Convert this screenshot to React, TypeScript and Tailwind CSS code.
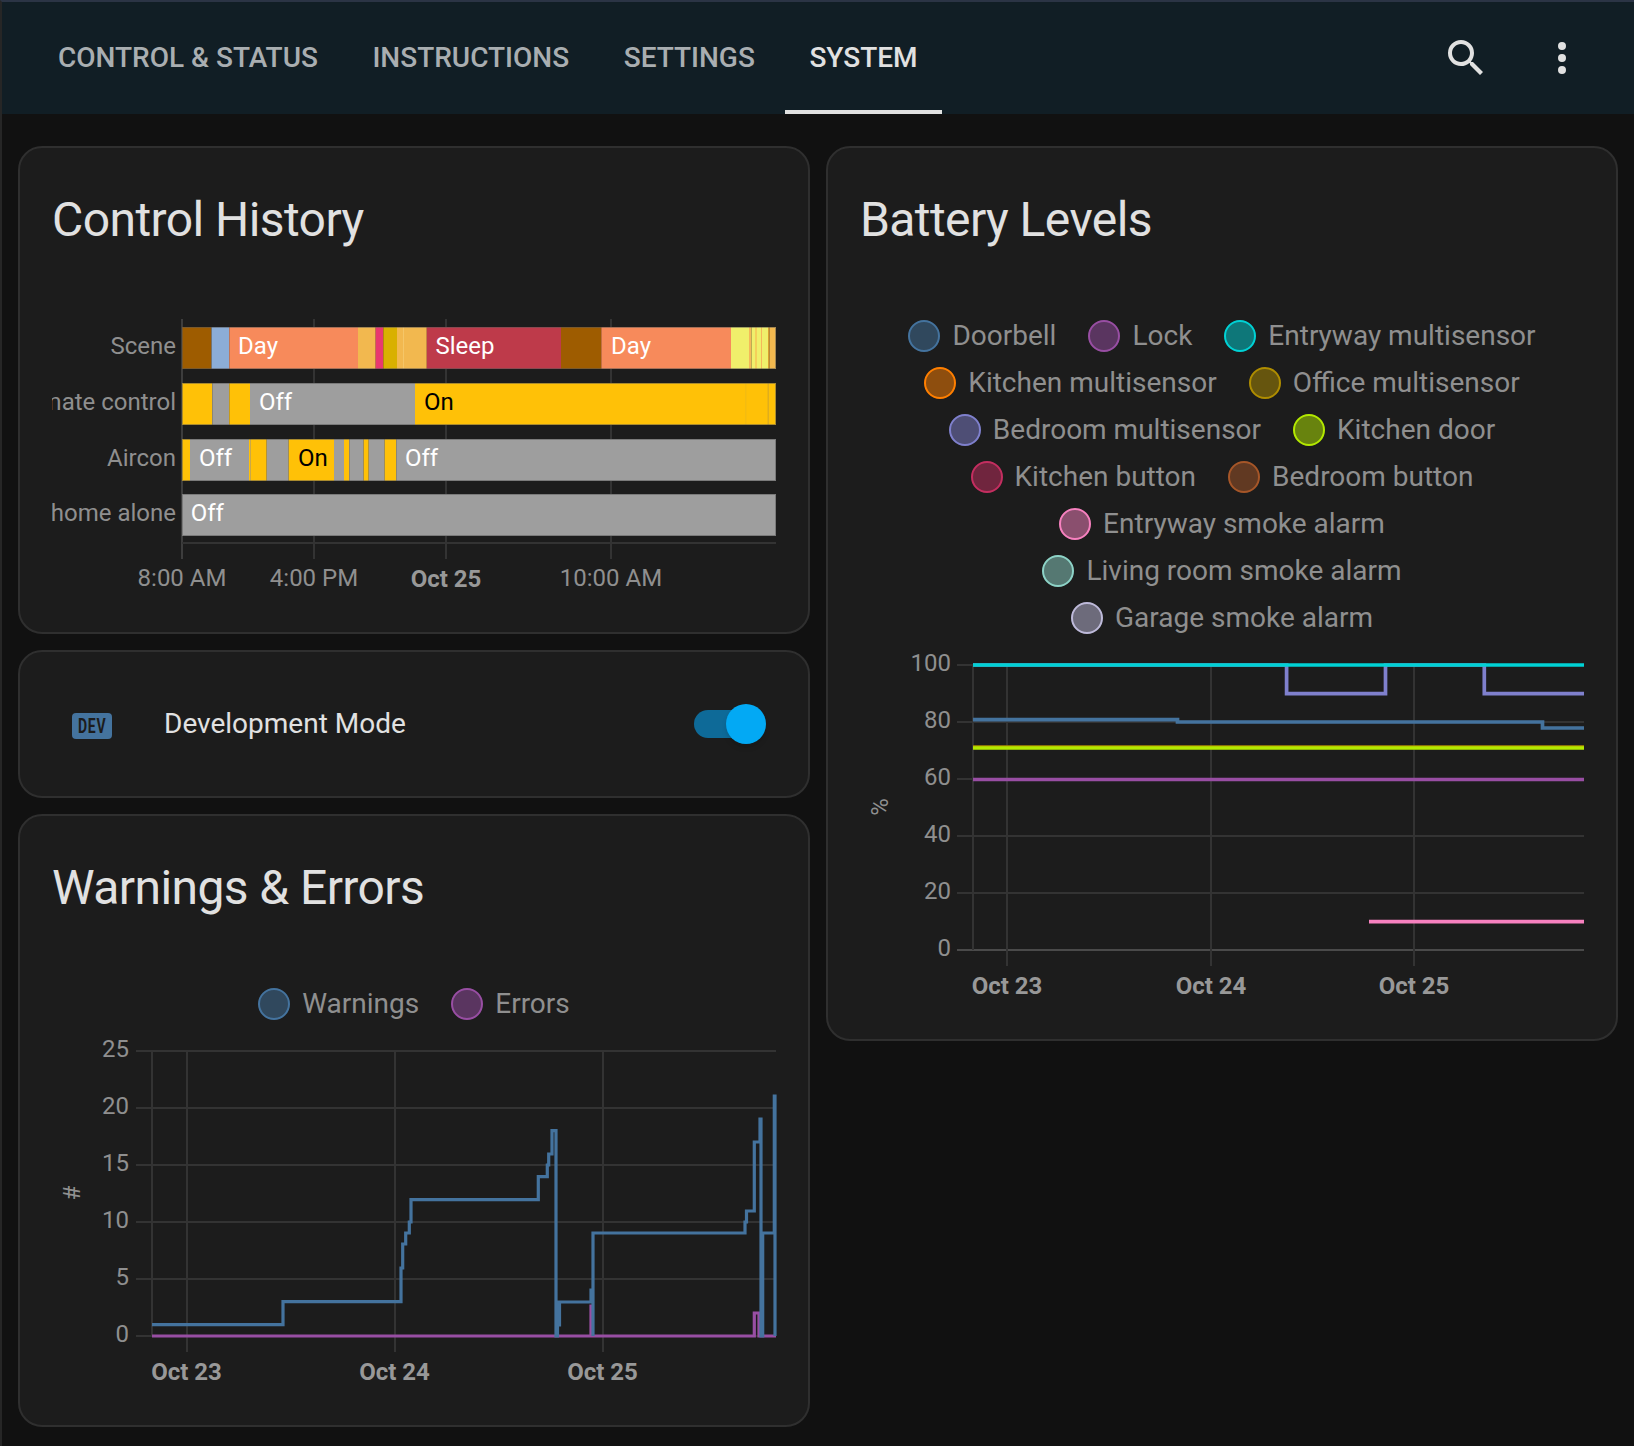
import type { ReactNode } from "react";

const GRID = "#333333";

const tabs = ["CONTROL & STATUS", "INSTRUCTIONS", "SETTINGS", "SYSTEM"];

type Seg = [number, number, string];

const BROWN = "#9e5c00";
const DAY = "#f78a5b";
const AMBER = "#f2b84f";
const YEL = "#ffc107";
const GRY = "#9e9e9e";
const LEMON = "#f0ef6b";

const timeline: { label: string; y: number; segs: Seg[]; texts: [number, string, string][] }[] = [
  {
    label: "Scene",
    y: 327,
    segs: [
      [182, 211.5, BROWN],
      [211.5, 229.3, "#8cadd6"],
      [229.3, 358, DAY],
      [358, 375.7, AMBER],
      [375.7, 383.3, "#e8396f"],
      [383.3, 397, "#d9b000"],
      [397, 426.8, AMBER],
      [403, 404, "#f5c668"],
      [426.8, 561, "#be3a4a"],
      [561, 601.3, BROWN],
      [601.3, 731, DAY],
      [731, 749, LEMON],
      [749, 751.5, "#f5b85a"],
      [751.5, 755, LEMON],
      [755, 757, "#f5cf5a"],
      [757, 761, LEMON],
      [761, 762, "#f5b85a"],
      [762, 768, LEMON],
      [768, 769.5, "#d9a030"],
      [769.5, 776, AMBER],
    ],
    texts: [
      [238, "Day", "#ffffff"],
      [435.5, "Sleep", "#ffffff"],
      [611, "Day", "#ffffff"],
    ],
  },
  {
    label: "Climate control",
    y: 383,
    segs: [
      [182, 212.3, YEL],
      [212.3, 229.3, GRY],
      [229.3, 250, YEL],
      [250, 415, GRY],
      [415, 776, YEL],
      [745.3, 746.3, "#efb915"],
      [767.5, 769, "#e0ae1c"],
    ],
    texts: [
      [259, "Off", "#ffffff"],
      [424, "On", "#000000"],
    ],
  },
  {
    label: "Aircon",
    y: 439,
    segs: [
      [182, 190, YEL],
      [190, 249, GRY],
      [249, 266.7, YEL],
      [250, 251, "#c9a84a"],
      [266.7, 288.7, GRY],
      [288.7, 334, YEL],
      [334, 344, GRY],
      [344, 349.3, YEL],
      [349.3, 363.7, GRY],
      [363.7, 368.7, YEL],
      [368.7, 384.7, GRY],
      [384.7, 396.3, YEL],
      [396.3, 776, GRY],
    ],
    texts: [
      [199, "Off", "#ffffff"],
      [298, "On", "#000000"],
      [405, "Off", "#ffffff"],
    ],
  },
  {
    label: "Dog home alone",
    y: 494,
    segs: [[182, 776, GRY]],
    texts: [[190.7, "Off", "#ffffff"]],
  },
];

const warningsPath =
  "M152 1324.6H283V1301.7H401V1268H402.7V1244H405.7V1233H409.3V1222H411V1199.7H538.3V1176.7H547.3V1165H548.7V1154H552V1130.7H556V1336H557.5V1302H558.5V1325H559.5V1302H591V1290H593V1336V1233H745V1222H746.5V1211H754.3V1142H760V1119H761V1336H762.7V1233H774.3V1096H775V1336";
const errorsPath = "M152 1336H591V1306H592V1336H754.3V1313H759V1336H776";

const batteryLines: [string, string][] = [
  ["#984ea3", "M973 779.5H1584"],
  ["#af8d00", "M973 747H1584"],
  ["#b3e900", "M973 748H1584"],
  ["#44739e", "M973 719.7H1177.5V722H1542.5V728H1584"],
  ["#7f80cd", "M973 665H1286.6V693.7H1385.5V665H1484.3V693.7H1584"],
  ["#f781bf", "M1369 921.7H1584"],
  ["#00d2d5", "M973 665H1584"],
];

const batteryLegend: [string, string][][] = [
  [
    ["Doorbell", "border-[#44739e] bg-[#44739e80]"],
    ["Lock", "border-[#984ea3] bg-[#984ea380]"],
    ["Entryway multisensor", "border-[#00d2d5] bg-[#00d2d580]"],
  ],
  [
    ["Kitchen multisensor", "border-[#ff7f00] bg-[#ff7f0080]"],
    ["Office multisensor", "border-[#af8d00] bg-[#af8d0080]"],
  ],
  [
    ["Bedroom multisensor", "border-[#7f80cd] bg-[#7f80cd80]"],
    ["Kitchen door", "border-[#b3e900] bg-[#b3e90080]"],
  ],
  [
    ["Kitchen button", "border-[#c42e60] bg-[#c42e6080]"],
    ["Bedroom button", "border-[#a65628] bg-[#a6562880]"],
  ],
  [["Entryway smoke alarm", "border-[#f781bf] bg-[#f781bf80]"]],
  [["Living room smoke alarm", "border-[#8dd3c7] bg-[#8dd3c780]"]],
  [["Garage smoke alarm", "border-[#bebada] bg-[#bebada80]"]],
];

function Card({ title, children }: { title: string; children: ReactNode }) {
  return (
    <section className="rounded-3xl border-2 border-[#2f2f2f] bg-[#1c1c1c]">
      <h2 className="h-[132px] pl-8 pt-10 text-[48px] leading-[64px] font-normal tracking-[-0.012em] text-[#e1e1e1]">
        {title}
      </h2>
      {children}
    </section>
  );
}

function LegendRow({ items }: { items: [string, string][] }) {
  return (
    <div className="flex h-[47px] items-center justify-center gap-8">
      {items.map(([name, swatch]) => (
        <div key={name} className="flex items-center gap-3">
          <span className={`h-8 w-8 rounded-full border-2 ${swatch}`} />
          <span className="text-[28px] leading-8 text-[#8f8f8f]">{name}</span>
        </div>
      ))}
    </div>
  );
}

function YTick({ x, y, label }: { x: number; y: number; label: string }) {
  return (
    <text x={x} y={y} textAnchor="end" className="fill-[#8f8f8f] text-[24px]">
      {label}
    </text>
  );
}

function XTick({ x, y, label }: { x: number; y: number; label: string }) {
  return (
    <text x={x} y={y} textAnchor="middle" className="fill-[#989898] text-[24px] font-bold">
      {label}
    </text>
  );
}

function ControlHistory() {
  return (
    <svg viewBox="20 280 788 352" className="block h-[352px] w-[788px]">
      <defs>
        <clipPath id="labels">
          <rect x="52" y="300" width="130" height="250" />
        </clipPath>
      </defs>
      {[314, 446, 611].map((x) => (
        <line key={x} x1={x} x2={x} y1={319} y2={559} stroke={GRID} strokeWidth={2} />
      ))}
      <line x1={182} x2={182} y1={319} y2={559} stroke="#3d3d3d" strokeWidth={2} />
      <line x1={182} x2={776} y1={543} y2={543} stroke={GRID} strokeWidth={2} />
      {timeline.map((row) => (
        <g key={row.label}>
          {row.segs.map(([a, b, c]) => (
            <rect key={`${a}-${c}`} x={a} y={row.y} width={b - a} height={42} fill={c} />
          ))}
          <rect
            x={182.5}
            y={row.y + 0.5}
            width={593}
            height={41}
            fill="none"
            stroke="#555555"
            strokeOpacity={0.5}
          />
          {row.texts.map(([x, t, c]) => (
            <text key={x} x={x} y={row.y + 27} fill={c} className="text-[24px]">
              {t}
            </text>
          ))}
          <text
            x={176}
            y={row.y + 27}
            textAnchor="end"
            clipPath="url(#labels)"
            className="fill-[#8f8f8f] text-[24px]"
          >
            {row.label}
          </text>
        </g>
      ))}
      <text x={182} y={586} textAnchor="middle" className="fill-[#8f8f8f] text-[24px]">
        8:00 AM
      </text>
      <text x={314} y={586} textAnchor="middle" className="fill-[#8f8f8f] text-[24px]">
        4:00 PM
      </text>
      <XTick x={446} y={587} label="Oct 25" />
      <text x={611} y={586} textAnchor="middle" className="fill-[#8f8f8f] text-[24px]">
        10:00 AM
      </text>
    </svg>
  );
}

function WarningsChart() {
  const rows: [number, string][] = [
    [1051, "25"],
    [1108, "20"],
    [1165, "15"],
    [1222, "10"],
    [1279, "5"],
    [1336, "0"],
  ];
  return (
    <svg viewBox="20 1027 788 398" className="block h-[398px] w-[788px]">
      {rows.map(([y, label]) => (
        <g key={label}>
          <line x1={136} x2={776} y1={y} y2={y} stroke={GRID} strokeWidth={2} />
          <YTick x={129} y={y + 6} label={label} />
        </g>
      ))}
      <line x1={152} x2={152} y1={1051} y2={1336} stroke={GRID} strokeWidth={2} />
      {[187, 395, 603].map((x) => (
        <line key={x} x1={x} x2={x} y1={1051} y2={1352} stroke={GRID} strokeWidth={2} />
      ))}
      <path d={errorsPath} fill="none" stroke="#984ea3" strokeWidth={3.2} />
      <path d={warningsPath} fill="none" stroke="#44739e" strokeWidth={3.2} />
      <XTick x={186.5} y={1380} label="Oct 23" />
      <XTick x={394.5} y={1380} label="Oct 24" />
      <XTick x={602.5} y={1380} label="Oct 25" />
      <text
        x={72}
        y={1193}
        textAnchor="middle"
        dominantBaseline="central"
        transform="rotate(-90 72 1193)"
        className="fill-[#8f8f8f] text-[24px]"
      >
        #
      </text>
    </svg>
  );
}

function BatteryChart() {
  const rows: [number, string][] = [
    [665, "100"],
    [722, "80"],
    [779, "60"],
    [836, "40"],
    [893, "20"],
    [950, "0"],
  ];
  return (
    <svg viewBox="828 641 788 398" className="block h-[398px] w-[788px]">
      {rows.map(([y, label]) => (
        <g key={label}>
          <line x1={957} x2={1584} y1={y} y2={y} stroke={y === 950 ? "#4a4a4a" : GRID} strokeWidth={2} />
          <YTick x={951} y={y + 6} label={label} />
        </g>
      ))}
      <line x1={973} x2={973} y1={665} y2={950} stroke={GRID} strokeWidth={2} />
      {[1007, 1211, 1414].map((x) => (
        <line key={x} x1={x} x2={x} y1={665} y2={966} stroke={GRID} strokeWidth={2} />
      ))}
      {batteryLines.map(([c, d]) => (
        <path key={c} d={d} fill="none" stroke={c} strokeWidth={3.7} />
      ))}
      <XTick x={1007} y={994} label="Oct 23" />
      <XTick x={1211} y={994} label="Oct 24" />
      <XTick x={1414} y={994} label="Oct 25" />
      <text
        x={880}
        y={807}
        textAnchor="middle"
        dominantBaseline="central"
        transform="rotate(-90 880 807)"
        className="fill-[#8f8f8f] text-[24px]"
      >
        %
      </text>
    </svg>
  );
}

export default function App() {
  return (
    <div className="min-h-[1446px] border-t-2 border-l-2 border-t-[#2b3445] border-l-[#262626] bg-[#111111] font-[Roboto,sans-serif]">
      <header className="flex h-[112px] items-center bg-[#111e25] pr-8 pl-8">
        <nav className="flex h-full flex-1 gap-[6.5px]">
          {tabs.map((t) => (
            <div
              key={t}
              className={`flex h-full items-center border-b-4 px-6 pt-1 text-[28px] font-medium ${
                t === "SYSTEM" ? "border-[#e1e1e1] text-[#e1e1e1]" : "border-transparent text-[#a9aeb1]"
              }`}
            >
              {t}
            </div>
          ))}
        </nav>
        <div className="flex gap-4 text-[#e1e1e1]">
          <button type="button" aria-label="Search" className="flex h-20 w-20 items-center justify-center">
            <svg viewBox="0 0 24 24" className="h-12 w-12 fill-current">
              <path d="M9.5,3A6.5,6.5 0 0,1 16,9.5C16,11.11 15.41,12.59 14.44,13.73L14.71,14H15.5L20.5,19L19,20.5L14,15.5V14.71L13.73,14.44C12.59,15.41 11.11,16 9.5,16A6.5,6.5 0 0,1 3,9.5A6.5,6.5 0 0,1 9.5,3M9.5,5C7,5 5,7 5,9.5C5,12 7,14 9.5,14C12,14 14,12 14,9.5C14,7 12,5 9.5,5Z" />
            </svg>
          </button>
          <button type="button" aria-label="Menu" className="flex h-20 w-20 items-center justify-center">
            <svg viewBox="0 0 24 24" className="h-12 w-12 fill-current">
              <path d="M12,16A2,2 0 0,1 14,18A2,2 0 0,1 12,20A2,2 0 0,1 10,18A2,2 0 0,1 12,16M12,10A2,2 0 0,1 14,12A2,2 0 0,1 12,14A2,2 0 0,1 10,12A2,2 0 0,1 12,10M12,4A2,2 0 0,1 14,6A2,2 0 0,1 12,8A2,2 0 0,1 10,6A2,2 0 0,1 12,4Z" />
            </svg>
          </button>
        </div>
      </header>

      <main className="grid grid-cols-2 items-start gap-4 px-4 pt-8">
        <div className="flex flex-col gap-4">
          <Card title="Control History">
            <ControlHistory />
          </Card>

          <section className="flex h-[148px] items-center rounded-3xl border-2 border-[#2f2f2f] bg-[#1c1c1c] pr-[58px] pl-[52px]">
            <span className="mt-1 flex h-[26px] w-10 items-center justify-center rounded bg-[#44739e] text-[20px] font-bold tracking-[1px] text-[#1c1c1c]">
              <span className="inline-block scale-x-[0.7]">DEV</span>
            </span>
            <span className="ml-[52px] flex-1 text-[28px] text-[#e1e1e1]">Development Mode</span>
            <div className="relative h-7 w-14 rounded-full bg-[#0e6a98]">
              <span className="absolute top-[-6px] right-[-16px] h-10 w-10 rounded-full bg-[#03a9f4] shadow-md" />
            </div>
          </section>

          <Card title="Warnings & Errors">
            <div className="pt-8">
              <LegendRow
                items={[
                  ["Warnings", "border-[#44739e] bg-[#44739e80]"],
                  ["Errors", "border-[#984ea3] bg-[#984ea380]"],
                ]}
              />
            </div>
            <WarningsChart />
          </Card>
        </div>

        <Card title="Battery Levels">
          <div className="pt-8">
            {batteryLegend.map((items) => (
              <LegendRow key={items[0][0]} items={items} />
            ))}
          </div>
          <BatteryChart />
        </Card>
      </main>
    </div>
  );
}
